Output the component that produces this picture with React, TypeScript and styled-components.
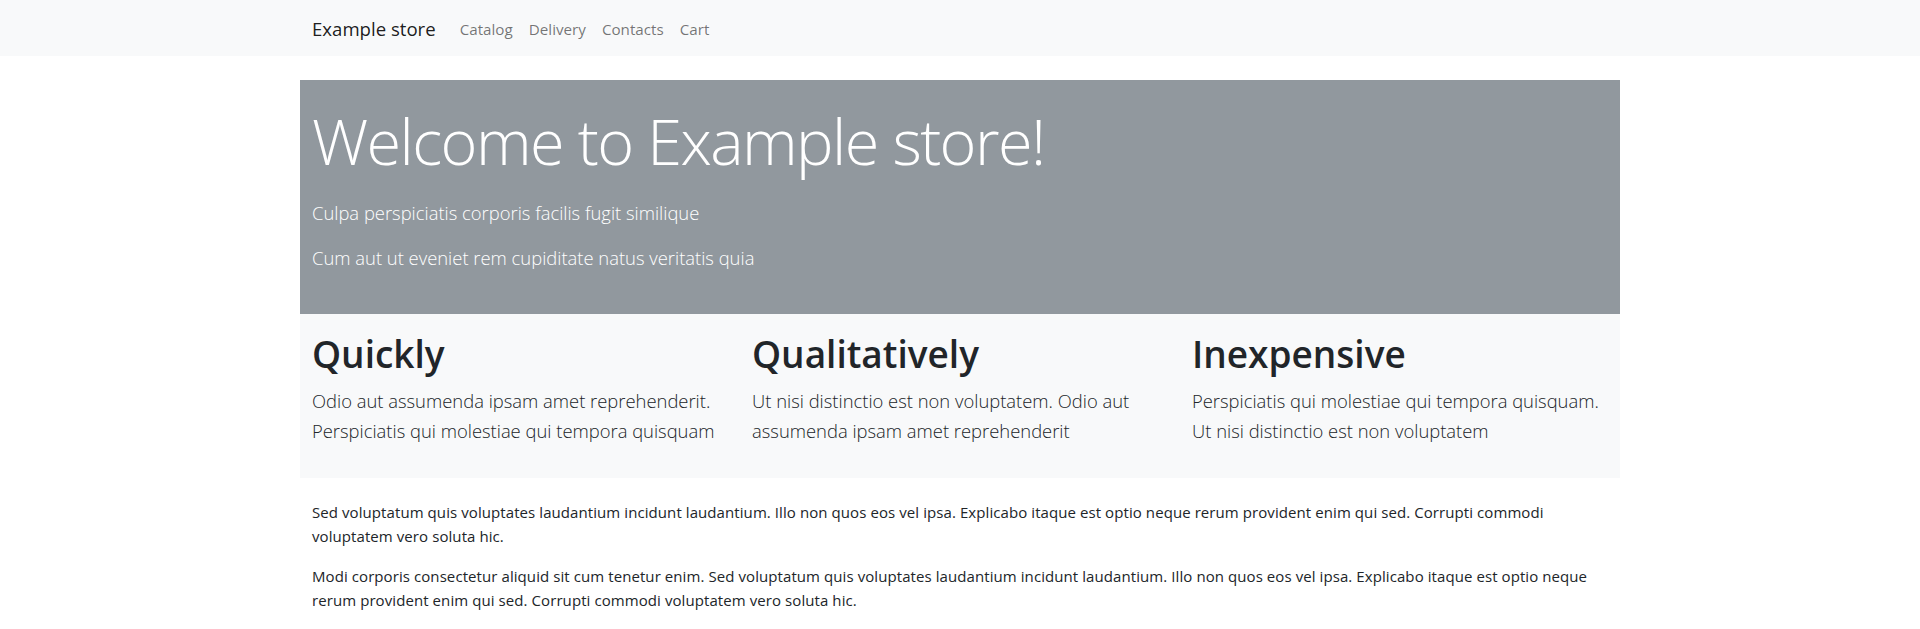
import React from 'react';
import styled, { createGlobalStyle } from 'styled-components';

const GlobalStyle = createGlobalStyle`
  html, body {
    margin: 0;
    padding: 0;
    background: #fff;
  }
  body {
    font-family: "Open Sans", "Noto Sans", sans-serif;
    font-size: 15px;
    line-height: 24px;
    color: #212529;
  }
  * {
    box-sizing: border-box;
  }
`;

const Navbar = styled.nav`
  background-color: #f8f9fa;
  padding: 9px 0 7px;
`;

const NavContainer = styled.div`
  max-width: 1320px;
  margin: 0 auto;
  padding: 0 12px;
  display: flex;
  align-items: center;
`;

const Brand = styled.a`
  font-size: 18.6px;
  line-height: 30px;
  padding: 5px 0;
  margin-right: 16px;
  color: rgba(0, 0, 0, 0.9);
  text-decoration: none;
`;

const NavList = styled.ul`
  display: flex;
  list-style: none;
  margin: 0;
  padding: 0;
`;

const NavLink = styled.a`
  display: block;
  padding: 8px;
  font-size: 15.2px;
  line-height: 24px;
  color: rgba(0, 0, 0, 0.55);
  text-decoration: none;
`;

const Main = styled.main`
  max-width: 1320px;
  margin: 24px auto 0;
`;

const Hero = styled.section`
  background-color: #91989e;
  color: #fff;
  padding: 18px 12px 26px;
`;

const HeroTitle = styled.h1`
  margin: 0 0 14px;
  font-size: 63px;
  font-weight: 300;
  letter-spacing: -1.6px;
  line-height: 86px;
`;

const Lead = styled.p<{ $gap?: number }>`
  margin: 0 0 ${(p) => p.$gap ?? 16}px;
  font-size: 18.4px;
  font-weight: 300;
  line-height: 30px;
`;

const Features = styled.section`
  background-color: #f8f9fa;
  padding: 16px 0;
  display: grid;
  grid-template-columns: repeat(3, 1fr);
`;

const Feature = styled.div`
  padding: 0 12px;
`;

const FeatureTitle = styled.h2`
  margin: 0 0 8px;
  font-size: 37px;
  font-weight: 600;
  line-height: 48px;
  color: #212529;
`;

const Body = styled.div`
  padding: 0 12px;
  margin-top: 22px;
`;

const Text = styled.p`
  margin: 0 0 16px;
  letter-spacing: 0.08px;
  &:last-child {
    margin-bottom: 0;
  }
`;

const links = ['Catalog', 'Delivery', 'Contacts', 'Cart'];

const features = [
  {
    title: 'Quickly',
    text: 'Odio aut assumenda ipsam amet reprehenderit. Perspiciatis qui molestiae qui tempora quisquam',
  },
  {
    title: 'Qualitatively',
    text: 'Ut nisi distinctio est non voluptatem. Odio aut assumenda ipsam amet reprehenderit',
  },
  {
    title: 'Inexpensive',
    text: 'Perspiciatis qui molestiae qui tempora quisquam. Ut nisi distinctio est non voluptatem',
  },
];

export default function App() {
  return (
    <>
      <GlobalStyle />
      <Navbar>
        <NavContainer>
          <Brand href="#">Example store</Brand>
          <NavList>
            {links.map((l) => (
              <li key={l}>
                <NavLink href="#">{l}</NavLink>
              </li>
            ))}
          </NavList>
        </NavContainer>
      </Navbar>
      <Main>
        <Hero>
          <HeroTitle>Welcome to Example store!</HeroTitle>
          <Lead $gap={15}>Culpa perspiciatis corporis facilis fugit similique</Lead>
          <Lead $gap={15}>Cum aut ut eveniet rem cupiditate natus veritatis quia</Lead>
        </Hero>
        <Features>
          {features.map((f) => (
            <Feature key={f.title}>
              <FeatureTitle>{f.title}</FeatureTitle>
              <Lead>{f.text}</Lead>
            </Feature>
          ))}
        </Features>
        <Body>
          <Text>
            Sed voluptatum quis voluptates laudantium incidunt laudantium. Illo non quos eos vel ipsa.
            Explicabo itaque est optio neque rerum provident enim qui sed. Corrupti commodi voluptatem
            vero soluta hic.
          </Text>
          <Text>
            Modi corporis consectetur aliquid sit cum tenetur enim. Sed voluptatum quis voluptates
            laudantium incidunt laudantium. Illo non quos eos vel ipsa. Explicabo itaque est optio neque
            rerum provident enim qui sed. Corrupti commodi voluptatem vero soluta hic.
          </Text>
        </Body>
      </Main>
    </>
  );
}
